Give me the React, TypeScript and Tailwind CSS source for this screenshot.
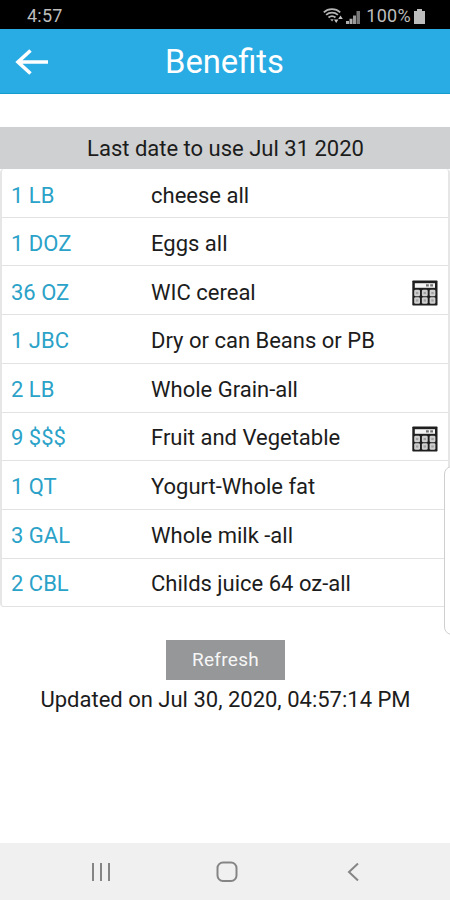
type Benefit = { qty: string; name: string; calc?: boolean; height: string };

const benefits: Benefit[] = [
  { qty: "1 LB", name: "cheese all", height: "h-[49px] pt-1" },
  { qty: "1 DOZ", name: "Eggs all", height: "h-12 pt-[3px]" },
  { qty: "36 OZ", name: "WIC cereal", calc: true, height: "h-[49px] pt-1" },
  { qty: "1 JBC", name: "Dry or can Beans or PB", height: "h-[49px] pt-[3px]" },
  { qty: "2 LB", name: "Whole Grain-all", height: "h-[49px] pt-[3px]" },
  { qty: "9 $$$", name: "Fruit and Vegetable", calc: true, height: "h-12 pt-[2px]" },
  { qty: "1 QT", name: "Yogurt-Whole fat", height: "h-[49px] pt-[3px]" },
  { qty: "3 GAL", name: "Whole milk -all", height: "h-[49px] pt-[3px]" },
  { qty: "2 CBL", name: "Childs juice 64 oz-all", height: "h-12 pt-[2px]" },
];

function CalculatorIcon() {
  return (
    <svg className="mt-[2px] h-[26px] w-[26px]" viewBox="0 0 26 26">
      <rect x="0.3" y="0.5" width="25.2" height="25" rx="0.8" fill="#1e1e1e" />
      <rect x="2.8" y="3.2" width="20.2" height="4.6" fill="#f4f4f4" />
      <path d="M14 5.400h2.800M18.200 5.400h2.800" stroke="#707070" strokeWidth="2.200" />
      {[2.2, 9.9, 17.6].map((x) =>
        [9.7, 17.2].map((y) => (
          <g key={`${x}-${y}`}>
            <rect x={x} y={y} width="5.800" height="6.600" rx="1.400" fill="#cfcfcf" />
            <rect x={x + 1.7} y={y + 2.2} width="2.400" height="2.200" fill="#a2a2a2" />
          </g>
        )),
      )}
    </svg>
  );
}

function StatusBar() {
  return (
    <header className="flex h-[29px] items-center justify-between bg-black pt-[3px] pr-[25px] pl-[27px] text-[18px] leading-none text-[#bdbdbd]">
      <span className="tracking-[0.2px]">4:57</span>
      <div className="flex items-center">
        <svg className="mr-[3px] h-4 w-5" viewBox="0 0 20 16" fill="none" stroke="#b5b5b5">
          <path d="M.8 4.300C5.300 0 12.700 0 17.200 4.300M3.100 6.900c3.400-3 8.400-3 11.800 0M5.500 9.500c2.200-1.800 4.800-1.800 7 0" strokeWidth="1.800" />
          <path d="M7.200 11.200h3.400l-1.500 2.300z" fill="#b5b5b5" stroke="none" />
          <path d="M11 11.500h4.400L13.200 15zM15.200 11l2.300-3.500 2.300 3.500z" fill="#c4c4c4" stroke="none" />
        </svg>
        <svg className="mr-[6px] h-[15px] w-[14px]" viewBox="0 0 14 15">
          <path d="M0 15v-3h3v3zM3.500 15V9.800h3V15z" fill="#b0b0b0" />
          <path d="M7 15V6.500h3V15z" fill="#999" />
          <path d="M10.500 15V2H14v13z" fill="#777" />
        </svg>
        <span className="tracking-[0.3px]">100%</span>
        <svg className="ml-[3px] h-[15px] w-[11px]" viewBox="0 0 11 15">
          <path d="M3 0h5v2h3v13H0V2h3z" fill="#bdbdbd" />
        </svg>
      </div>
    </header>
  );
}

export default function App() {
  return (
    <div className="relative flex h-[900px] w-[450px] flex-col overflow-hidden bg-white font-[Roboto,sans-serif] text-[22px] text-[#1c1c1c]">
      <StatusBar />
      <nav className="flex h-[65px] items-center border-b border-[#159ccb] bg-[#29abe4] text-white">
        <svg className="mt-[2px] ml-[15px] h-[26px] w-[33px]" viewBox="0 0 33 26" fill="none" stroke="white" strokeWidth="3.600">
          <path d="M15.500 1.500L3 13l12.500 11.500M2.500 13H33" />
        </svg>
        <h1 className="mt-[3px] ml-[117px] text-[32.75px] leading-none whitespace-nowrap">Benefits</h1>
      </nav>
      <main className="flex flex-1 flex-col items-center pt-[33px]">
        <h2 className="flex h-[42px] w-full items-center justify-center bg-[#cfd0d1] pl-px">
          Last date to use Jul 31 2020
        </h2>
        <ul className="w-full rounded-sm border-x-2 border-x-[#e6e6e6]">
          {benefits.map((b) => (
            <li key={b.qty + b.name} className={`flex items-center border-b-[1.5px] border-[#e2e2e2] pr-[10px] pl-[9px] ${b.height}`}>
              <span className="w-[140px] text-[#2ba2c8]">{b.qty}</span>
              <span className="flex-1">{b.name}</span>
              {b.calc && <CalculatorIcon />}
            </li>
          ))}
        </ul>
        <button className="mt-[33px] ml-px h-10 w-[119px] bg-[#959799] pt-px text-[19px] tracking-[0.3px] text-[#f6f6f6]">Refresh</button>
        <p className="mt-[3px] pl-px">Updated on Jul 30, 2020, 04:57:14 PM</p>
      </main>
      <footer className="flex h-[57px] items-center bg-[#f0f0f0] text-[#858585]">
        <svg className="ml-[91px] h-[18px] w-5" viewBox="0 0 20 18" stroke="currentColor" strokeWidth="2">
          <path d="M2 0v18M10 0v18M18 0v18" />
        </svg>
        <svg className="ml-[105px] h-[22px] w-[22px]" viewBox="0 0 22 22" fill="none" stroke="currentColor" strokeWidth="2">
          <rect x="1.500" y="1.500" width="19" height="18.500" rx="5.500" />
        </svg>
        <svg className="ml-[109px] h-[18px] w-3" viewBox="0 0 12 18" fill="none" stroke="currentColor" strokeWidth="2">
          <path d="M11 .5L2 9l9 8.500" />
        </svg>
      </footer>
      <aside className="absolute top-[466px] -right-[10px] h-[169px] w-4 rounded-[9px] border border-[#cfcfcf] bg-white" />
    </div>
  );
}
